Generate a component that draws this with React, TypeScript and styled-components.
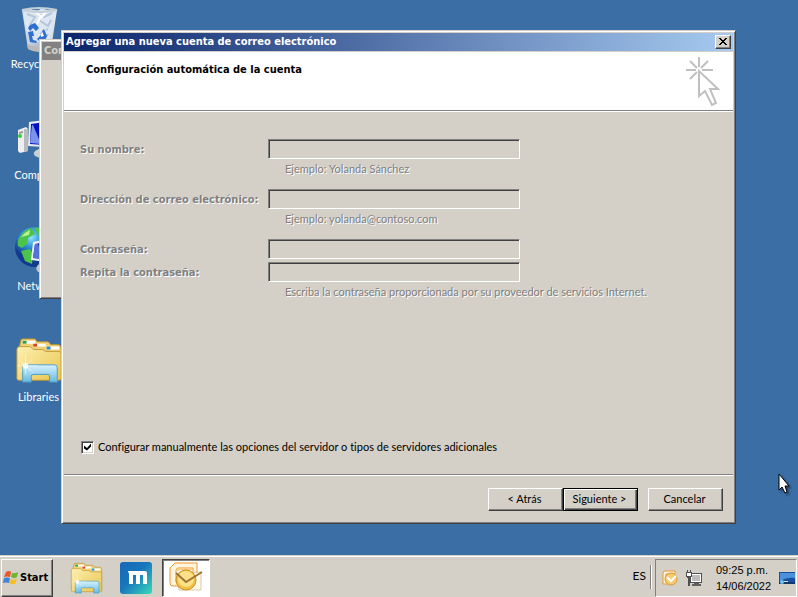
import React from 'react';
import styled, { createGlobalStyle, css } from 'styled-components';

const face = '#d4d0c8';
const shadow = '#808080';
const dark = '#404040';
const bodyFont = 'Lato, "Noto Sans", sans-serif';
const boldFont = '"DejaVu Sans Condensed", "DejaVu Sans", sans-serif';
const clockFont = '"Liberation Sans", Arial, sans-serif';

const GlobalStyle = createGlobalStyle`
  *, *::before, *::after { box-sizing: border-box; }
  body { margin: 0; background: #3a6ea5; overflow: hidden; }
  button, input { font: inherit; color: inherit; margin: 0; border-radius: 0; }
`;

const Screen = styled.div`
  display: flex;
  flex-direction: column;
  height: 100vh;
  background: #3a6ea5;
  color: #000;
  font: 11px/16px ${bodyFont};
  font-variant-ligatures: none;
  cursor: default;
`;

const Desktop = styled.main`
  position: relative;
  flex: 1;
  min-height: 0;
  overflow: hidden;
`;

const IconColumn = styled.div`
  display: flex;
  flex-direction: column;
  gap: 39px;
  width: 77px;
  padding-top: 4px;
`;

const DesktopItem = styled.button`
  display: flex;
  flex-direction: column;
  align-items: center;
  gap: 4px;
  height: 72px;
  padding: 0;
  border: 0;
  background: none;
  color: #fff;
  white-space: nowrap;

  svg { display: block; width: 48px; height: 48px; flex: none; }
`;

const raised = css`
  border: 1px solid;
  border-color: ${face} ${dark} ${dark} ${face};
  box-shadow: inset 1px 1px 0 #fff, inset -1px -1px 0 ${shadow};
  background: ${face};
`;

const BackWindow = styled.section`
  ${raised}
  position: absolute;
  left: 39px;
  top: 39px;
  width: 400px;
  height: 260px;
  padding: 2px;
`;

const Dialog = styled.section`
  ${raised}
  position: absolute;
  left: 61px;
  right: 62px;
  top: 30px;
  padding: 2px;
  display: flex;
  flex-direction: column;
`;

const TitleBar = styled.header<{ $active?: boolean }>`
  display: flex;
  align-items: center;
  justify-content: space-between;
  height: 18px;
  padding: 0 2px;
  font: bold 11px/18px ${boldFont};
  color: ${p => (p.$active ? '#fff' : face)};
  background: ${p => (p.$active ? 'linear-gradient(90deg, #0a246a, #a6caf0)' : 'linear-gradient(90deg, #808080, #c0c0c0)')};
`;

const TitleText = styled.h1`
  margin: 0;
  font: inherit;
`;

const CloseButton = styled.button`
  display: flex;
  justify-content: center;
  width: 16px;
  height: 14px;
  padding: 2px 0 0;
  border: 1px solid;
  border-color: #fff ${dark} ${dark} #fff;
  box-shadow: inset -1px -1px 0 ${shadow};
  background: ${face};
`;

const Banner = styled.div`
  display: flex;
  justify-content: space-between;
  height: 59px;
  margin-top: 1px;
  padding: 10px 12px 0 22px;
  background: #fff;
  border-bottom: 1px solid ${shadow};

  svg { display: block; margin-top: -6px; }
`;

const BannerTitle = styled.h2`
  margin: 0;
  font: bold 11px/16px ${boldFont};
`;

const Form = styled.form`
  display: flex;
  flex-direction: column;
`;

const FieldGrid = styled.div`
  display: grid;
  grid-template-columns: 188px 252px 1fr;
  padding: 27px 16px 0;
  border-top: 1px solid #fff;
  color: ${shadow};
  text-shadow: 1px 1px 0 #fff;
`;

const FieldGroup = styled.div<{ $gap: number }>`
  display: grid;
  grid-column: 1 / -1;
  grid-template-columns: subgrid;
  grid-auto-rows: 20px;
  align-items: center;
  margin-bottom: ${p => p.$gap}px;
`;

const FieldLabel = styled.label`
  padding-top: 2px;
  font: bold 11px/18px ${boldFont};
  white-space: nowrap;
`;

const TextField = styled.input`
  width: 100%;
  height: 20px;
  padding: 1px 3px;
  border: 1px solid;
  border-color: ${shadow} #fff #fff ${shadow};
  box-shadow: inset 1px 1px 0 ${dark};
  background: ${face};
`;

const Hint = styled.p`
  grid-column: 2 / -1;
  margin: 0;
  padding-left: 17px;
  white-space: nowrap;
`;

const ManualOption = styled.label`
  display: flex;
  align-items: center;
  gap: 4px;
  height: 20px;
  margin: 135px 17px 17px;
`;

const Check = styled.input`
  appearance: none;
  display: block;
  width: 13px;
  height: 13px;
  border: 1px solid;
  border-color: ${shadow} #fff #fff ${shadow};
  box-shadow: inset 1px 1px 0 ${dark}, inset -1px -1px 0 ${face};
  background: #fff;

  &:checked::before {
    content: '';
    display: block;
    width: 7px;
    height: 7px;
    margin: 2px;
    background: #000;
    clip-path: polygon(0 28%, 43% 65%, 100% 0, 100% 43%, 43% 100%, 0 70%);
  }
`;

const Footer = styled.footer`
  display: flex;
  justify-content: flex-end;
  padding: 13px 10px 10px;
  border-top: 1px solid ${shadow};
  box-shadow: inset 0 1px 0 #fff;
`;

const DialogButton = styled.button<{ $default?: boolean; $apart?: boolean }>`
  width: 75px;
  height: 23px;
  padding: 0 2px 2px 0;
  margin-left: ${p => (p.$apart ? 10 : 0)}px;
  border: 1px solid;
  ${p => p.$default
    ? css`
        border-color: #000;
        box-shadow: inset 1px 1px 0 #fff, inset -1px -1px 0 ${dark}, inset -2px -2px 0 ${shadow};
      `
    : css`
        border-color: #fff ${dark} ${dark} #fff;
        box-shadow: inset -1px -1px 0 ${shadow};
      `}
  background: ${face};
`;

const Pointer = styled.svg`
  position: absolute;
  left: 778px;
  top: 473px;
  filter: drop-shadow(2px 2px 1px rgba(0, 0, 0, 0.4));
`;

const Taskbar = styled.nav`
  display: flex;
  flex: none;
  height: 42px;
  padding-top: 3px;
  background: ${face};
  border-top: 1px solid ${face};
  box-shadow: inset 0 1px 0 #fff;
`;

const StartButton = styled.button`
  display: flex;
  align-items: center;
  gap: 1px;
  width: 52px;
  margin-left: 1px;
  padding: 0 1px;
  border: 1px solid;
  border-color: #fff ${dark} ${dark} #fff;
  box-shadow: inset -1px -1px 0 ${shadow};
  background: ${face};
  font: bold 11px/16px ${boldFont};
`;

const TaskButton = styled.button<{ $pressed?: boolean }>`
  display: grid;
  place-items: center;
  width: 48px;
  margin-left: 2px;
  padding: 0;
  border: 1px solid transparent;
  background: none;
  ${p => p.$pressed && css`
    border-color: ${dark} #fff #fff ${dark};
    box-shadow: inset 1px 1px 0 ${shadow};
    background: #fff;
  `}
`;

const Quick = styled.div`
  display: flex;
  flex: 1;
  padding-left: 7px;
`;

const Language = styled.span`
  align-self: center;
  padding: 0 4px;
  margin-bottom: 4px;
  font-size: 12px;
`;

const Divider = styled.span`
  width: 2px;
  height: 24px;
  margin: 6px 3px 0 0;
  border-left: 1px solid ${shadow};
  border-right: 1px solid #fff;
`;

const Tray = styled.div`
  display: flex;
  align-items: center;
  gap: 8px;
  width: 142px;
  margin-right: 1px;
  padding: 0 1px 0 6px;
  border: 1px solid;
  border-color: ${shadow} #fff #fff ${shadow};
`;

const Clock = styled.time`
  width: 55px;
  margin-left: 6px;
  font-family: ${clockFont};
  white-space: nowrap;
`;

const RecycleIcon = () => (
  <svg viewBox="0 0 48 48" aria-hidden="true">
    <defs>
      <linearGradient id="bin" x1="0" x2="1">
        <stop offset="0" stopColor="#d6dee6" /><stop offset=".5" stopColor="#aebfd1" /><stop offset="1" stopColor="#e9eef2" />
      </linearGradient>
    </defs>
    <path d="M7 6 L42 6 L36 45 Q24 50 13 45 Z" fill="url(#bin)" />
    <path d="M8 7 L16 5 L21 8 L27 4 L34 7 L41 5 L38 21 L34 38 L15 38 L10 20 Z" fill="#dce7f2" />
    <path d="M12 10 l8 3 -5 8 M22 9 l7 4 8-4 M24 16 l9 6 3-6 M25 30 l8-5 M28 38 l5-8" fill="none" stroke="#b3c6da" strokeWidth="2" />
    <path d="M19 7 l7 5 -4 8 M31 8 l-5 6 M30 26 l-5 9" fill="none" stroke="#fff" strokeWidth="2" />
    <path d="M15 21 l5-2 4 5 -3 3 -3-3 -3 3 -2-3z M13 28 l5-1 1 5 -2 0 1 4 4 1 -1 2 -6-1z M22 35 l4-4 0 2 3-1 -2-5 2-2 3 7 -2 4 -4 1 0 2z" fill="#2f6fd0" />
    <path d="M7 6 Q24 2 42 6 Q24 10 7 6" fill="none" stroke="#c4ced6" strokeWidth="2" />
    <path d="M12 40 Q24 45 37 40 L36 45 Q24 51 13 45Z" fill="#b9bab8" />
  </svg>
);

const ComputerIcon = () => (
  <svg viewBox="0 0 48 48" aria-hidden="true">
    <path d="M14 7 L46 3 L45 33 L13 31Z" fill="#e8edf2" />
    <path d="M16 9 L45 5 L43 31 L15 29Z" fill="#0010c4" />
    <path d="M17 10 L18 10 L26 29 L15 28Z" fill="#7c93ea" />
    <path d="M24 34 h11 v4 h7 v3 q-12 6 -22 0 q-4-4 4-7z" fill="#c9d0d5" />
    <path d="M3 15 L11 12 L13 14 L13 36 L5 38 L3 36Z" fill="#eee" />
    <path d="M9 14 L13 14 L13 36 L9 37Z" fill="#b7bbbd" />
    <path d="M4 17 l4-1 v2 l-4 1z" fill="#999" /><circle cx="5" cy="21" r="2" fill="#32cf32" />
  </svg>
);

const NetworkIcon = () => (
  <svg viewBox="0 0 48 48" aria-hidden="true">
    <defs><radialGradient id="globe" cx=".4" cy=".25"><stop stopColor="#94e5ff" /><stop offset=".5" stopColor="#2e91d7" /><stop offset="1" stopColor="#123a8e" /></radialGradient></defs>
    <circle cx="20" cy="21" r="20" fill="url(#globe)" />
    <path d="M3 14 Q8 4 16 2 L20 8 L13 12 L12 18 L7 22 L3 20Z M19 2 Q28 0 34 8 L25 12Z M6 25 L15 23 L18 28 L17 38 L10 35Z" fill="#4cc44a" />
    <path d="M6 11 Q10 6 15 4 L14 9Z" fill="#b8f28e" />
    <path d="M18 16 L46 10 L46 38 L16 34Z" fill="#eceef4" /><path d="M20 18 L46 13 L46 35 L18 32Z" fill="#0a1aa0" />
    <path d="M20 18 l3 0 5 15 -10-1z" fill="#5273dc" />
    <path d="M24 38 h12 v8 h-13 q-4-4 1-8z" fill="#bcc6d1" />
  </svg>
);

const FolderIcon = ({ size = 48 }: { size?: number }) => (
  <svg width={size} height={size} viewBox="0 0 50 48" aria-hidden="true">
    <defs>
      <linearGradient id="folder" x1="0" y1="0" x2="1" y2="1"><stop stopColor="#fdf0b2" /><stop offset="1" stopColor="#e8c44c" /></linearGradient>
      <linearGradient id="stand" x1="0" y1="0" x2="0" y2="1"><stop stopColor="#d7f2fc" /><stop offset="1" stopColor="#66b9e2" /></linearGradient>
    </defs>
    <path d="M4 12 L6 3 Q6 1 8 1 H21 L23 4 H34 Q36 4 37 7 H46 Q48 8 48 11 V42 H3Z" fill="#f0d377" stroke="#bb9135" />
    <path d="M8 3 h13 v3 h-13z M19 6 h13 v3 h-13z M33 9 h13 v3 h-13z" fill="#fff" />
    <path d="M8 3 h4 v3 h-4z" fill="#23a34b" /><path d="M19 6 h4 v3 h-4z" fill="#d94222" /><path d="M33 9 h4 v3 h-4z" fill="#2a89d5" />
    <path d="M2 12 Q2 9 5 9 H16 L19 12 H29 L32 14 H46 Q48 14 48 17 V42 Q48 44 46 44 H4 Q2 44 2 42Z" fill="url(#folder)" stroke="#c29a3a" />
    <path d="M8 46 V31 Q8 28 11 28 H41 Q44 28 44 31 V46 H36 V39 Q36 38 34 38 H19 Q17 38 17 40 V46Z" fill="url(#stand)" stroke="#4b9dc7" />
    <path d="M11 18 V38 M2 29 H24 M4 23 L19 36 M5 36 L18 22" stroke="#fff" strokeOpacity=".5" />
    <circle cx="11" cy="29" r="3" fill="#fff" fillOpacity=".8" />
  </svg>
);

const WizardIcon = () => (
  <svg width="36" height="52" viewBox="0 0 36 52" fill="none" stroke="#c0c0c0" strokeWidth="2" aria-hidden="true">
    <path d="M14 1 v10 M1 14 h10 M17 14 h11 M5 5 l7 7 M23 5 l-7 7 M12 16 l-7 7 M14 15 V40 L20 35 L27 49 L31 47 L25 33 H33 Z" />
  </svg>
);

const WindowsFlag = () => (
  <svg width="16" height="16" viewBox="0 0 16 16" aria-hidden="true">
    <path d="M3 2 Q6 0 8 2 L7 7 Q4 6 1 7Z" fill="#e8562a" />
    <path d="M9 3 Q12 4 15 2 L14 7 Q11 9 8 7Z" fill="#6fb52c" />
    <path d="M1 8 Q4 7 7 8 L6 13 Q3 12 0 13Z" fill="#3d84d8" />
    <path d="M8 9 Q11 10 14 9 L12 14 Q9 15 6 13Z" fill="#f7bd28" />
  </svg>
);

const MaxthonIcon = () => (
  <svg width="32" height="32" viewBox="0 0 32 32" aria-hidden="true">
    <defs><linearGradient id="mx" x1="0" y1="0" x2="1" y2="1"><stop stopColor="#1768b8" /><stop offset=".45" stopColor="#1876bd" /><stop offset="1" stopColor="#36dcb7" /></linearGradient></defs>
    <rect width="32" height="32" rx="3" fill="url(#mx)" />
    <path d="M8 9 H25 Q27 9 27 11 V22 H23 V13 H20 V22 H16 V13 H13 V22 H9 V12Z" fill="#fff" />
  </svg>
);

const OutlookIcon = () => (
  <svg width="34" height="32" viewBox="0 0 34 32" aria-hidden="true">
    <path d="M6 1 H28 V11 H24 V6 H9 Q7 6 7 9 V20 H14 V24 H4 Q1 24 1 21 V6Z" fill="#fff4df" stroke="#ec9630" />
    <path d="M8 9 Q8 7 11 7 H23" fill="none" stroke="#f9cb83" strokeWidth="2" />
    <path d="M8 12 L32 10 V28 H10Z" fill="#fff9eb" stroke="#dcc9a7" />
    <circle cx="17" cy="18" r="10" fill="#f2bf3e" stroke="#c99324" />
    <circle cx="17" cy="17" r="8" fill="#fce08a" />
    <path d="M7 11 L17 20 L33 10" fill="none" stroke="#9c7434" strokeWidth="2" />
  </svg>
);

const OutlookTrayIcon = () => (
  <svg width="16" height="16" viewBox="0 0 16 16" aria-hidden="true">
    <path d="M2 1 H13 V4 H4 V12 H6 V14 H1 V3Z" fill="#fff4df" stroke="#ec9630" />
    <circle cx="9" cy="9" r="6" fill="#f6cc72" stroke="#dc9834" />
    <path d="M5 7 L9 11 L14 6" fill="none" stroke="#fff" strokeWidth="2" />
  </svg>
);

const NetworkTrayIcon = () => (
  <svg width="16" height="16" viewBox="0 0 16 16" shapeRendering="crispEdges" aria-hidden="true">
    <path d="M4 3 H16 V13 H4Z" fill="#505050" />
    <path d="M5 4 H15 V12 H5Z" fill="#fff" />
    <path d="M6 5 H14 V11 H6Z" fill="#bcbcbc" />
    <path d="M8 13 H13 V14 H15 V16 H6 V14 H8Z" fill="#606060" />
    <path d="M0 2 H1 V0 H2 V2 H4 V0 H5 V2 H6 V7 H5 V8 H4 V16 H2 V8 H1 V7 H0Z" fill="#505050" />
    <path d="M1 3 H5 V6 H1Z" fill="#fff" />
  </svg>
);

const DesktopTrayIcon = () => (
  <svg width="16" height="16" viewBox="0 0 16 16" aria-hidden="true">
    <path d="M0 2 H16 V14 H0Z" fill="#194f9e" />
    <path d="M1 3 H16 V8 Q8 7 1 11Z" fill="#4b91dc" />
    <path d="M0 12 H16 V14 H0Z" fill="#12386f" /><circle cx="3" cy="12" r="2" fill="#6dc5ee" />
    <path d="M5 11 h4 v1 h-4z" fill="#d0e8f8" />
  </svg>
);

const shortcuts = [
  { name: 'Recycle Bin', icon: <RecycleIcon /> },
  { name: 'Computer', icon: <ComputerIcon /> },
  { name: 'Network', icon: <NetworkIcon /> },
  { name: 'Libraries', icon: <FolderIcon /> },
];

export default function App() {
  return (
    <>
      <GlobalStyle />
      <Screen>
        <Desktop>
          <IconColumn>
            {shortcuts.map(s => (
              <DesktopItem key={s.name} type="button">{s.icon}<span>{s.name}</span></DesktopItem>
            ))}
          </IconColumn>

          <BackWindow>
            <TitleBar>Con</TitleBar>
          </BackWindow>

          <Dialog role="dialog" aria-labelledby="dialog-title">
            <TitleBar $active>
              <TitleText id="dialog-title">Agregar una nueva cuenta de correo electrónico</TitleText>
              <CloseButton type="button" aria-label="Cerrar">
                <svg width="8" height="7" viewBox="0 0 8 7" shapeRendering="crispEdges" aria-hidden="true">
                  <path d="M0 0h2v1h1v1h2v-1h1v-1h2v1h-1v1h-1v1h-1v1h1v1h1v1h1v1h-2v-1h-1v-1h-2v1h-1v1h-2v-1h1v-1h1v-1h1v-1h-1v-1h-1v-1h-1z" />
                </svg>
              </CloseButton>
            </TitleBar>
            <Banner>
              <BannerTitle>Configuración automática de la cuenta</BannerTitle>
              <WizardIcon />
            </Banner>
            <Form onSubmit={e => e.preventDefault()}>
              <FieldGrid>
                <FieldGroup $gap={10}>
                  <FieldLabel htmlFor="name">Su nombre:</FieldLabel>
                  <TextField id="name" type="text" disabled />
                  <Hint>Ejemplo: Yolanda Sánchez</Hint>
                </FieldGroup>
                <FieldGroup $gap={10}>
                  <FieldLabel htmlFor="email">Dirección de correo electrónico:</FieldLabel>
                  <TextField id="email" type="email" disabled />
                  <Hint>Ejemplo: yolanda@contoso.com</Hint>
                </FieldGroup>
                <FieldGroup $gap={3}>
                  <FieldLabel htmlFor="password">Contraseña:</FieldLabel>
                  <TextField id="password" type="password" disabled />
                </FieldGroup>
                <FieldGroup $gap={0}>
                  <FieldLabel htmlFor="repeat">Repita la contraseña:</FieldLabel>
                  <TextField id="repeat" type="password" disabled />
                  <Hint>Escriba la contraseña proporcionada por su proveedor de servicios Internet.</Hint>
                </FieldGroup>
              </FieldGrid>
              <ManualOption>
                <Check type="checkbox" defaultChecked />
                Configurar manualmente las opciones del servidor o tipos de servidores adicionales
              </ManualOption>
              <Footer>
                <DialogButton type="button">&lt; Atrás</DialogButton>
                <DialogButton type="submit" $default>Siguiente &gt;</DialogButton>
                <DialogButton type="button" $apart>Cancelar</DialogButton>
              </Footer>
            </Form>
          </Dialog>

          <Pointer width="12" height="21" viewBox="0 0 12 21" aria-hidden="true">
            <path d="M1 1 V17 L4 14 L7 20 L9 19 L7 13 H11Z" fill="#fff" stroke="#000" />
          </Pointer>
        </Desktop>

        <Taskbar>
          <StartButton type="button"><WindowsFlag />Start</StartButton>
          <Quick>
            <TaskButton type="button" aria-label="Libraries"><FolderIcon size={33} /></TaskButton>
            <TaskButton type="button" aria-label="Maxthon"><MaxthonIcon /></TaskButton>
            <TaskButton type="button" aria-label="Outlook" $pressed><OutlookIcon /></TaskButton>
          </Quick>
          <Language>ES</Language>
          <Divider />
          <Tray>
            <OutlookTrayIcon />
            <NetworkTrayIcon />
            <Clock>09:25 p.m.<br />14/06/2022</Clock>
            <DesktopTrayIcon />
          </Tray>
        </Taskbar>
      </Screen>
    </>
  );
}
